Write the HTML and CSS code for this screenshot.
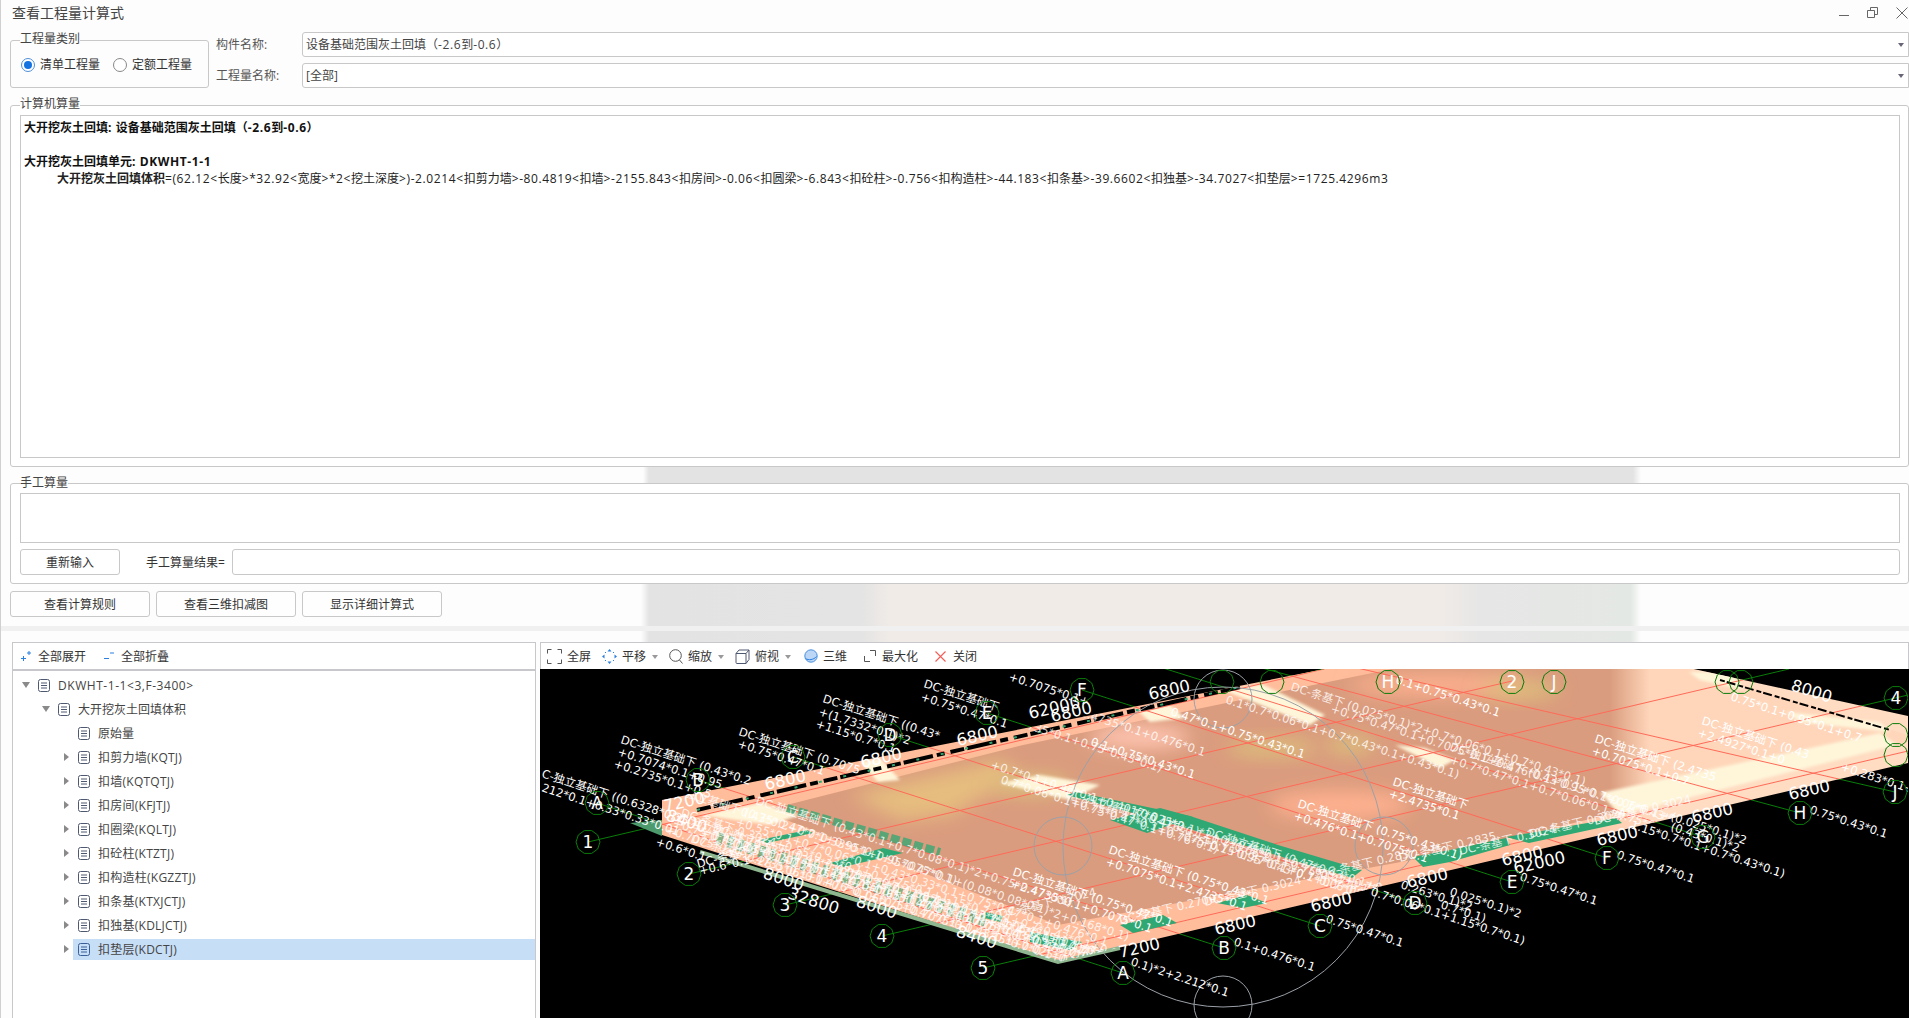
FILE: index.html
```html
<!DOCTYPE html>
<html lang="zh">
<head>
<meta charset="utf-8">
<title>查看工程量计算式</title>
<link rel="stylesheet" href="styles.css">
</head>
<body>
<div class="window">
  <header class="titlebar">
    <span class="title">查看工程量计算式</span>
    <div class="winbtns">
      <svg width="10" height="20" viewBox="0 0 10 20"><path d="M0 15.500h10" class="ln"/></svg>
      <svg width="11" height="20" viewBox="0 0 11 20"><path d="M.5 10.500h7v7h-7zM3.500 10V7.500h7v7H8" class="ln"/></svg>
      <svg width="12" height="20" viewBox="0 0 12 20"><path d="M.5 7.500l11 11M11.500 7.500l-11 11" class="ln"/></svg>
    </div>
  </header>

  <section class="top">
    <fieldset class="group kind">
      <legend class="legend">工程量类别</legend>
      <div class="radios">
        <label class="radio"><span class="dot on"></span>清单工程量</label>
        <label class="radio"><span class="dot"></span>定额工程量</label>
      </div>
    </fieldset>
    <div class="form">
      <span class="flabel">构件名称:</span>
      <div class="combo"><span>设备基础范围灰土回填（<span class="n">-2.6</span>到<span class="n">-0.6</span>）</span><i class="caret"></i></div>
      <span class="flabel">工程量名称:</span>
      <div class="combo"><span>[全部]</span><i class="caret"></i></div>
    </div>
  </section>

  <fieldset class="group computer">
    <legend class="legend">计算机算量</legend>
    <div class="formula">
      <p class="b">大开挖灰土回填<span class="n">: </span>设备基础范围灰土回填（<span class="n">-2.6</span>到<span class="n">-0.6</span>）</p>
      <p>&nbsp;</p>
      <p class="b">大开挖灰土回填单元<span class="n">: DKWHT-1-1</span></p>
      <p class="fline"><b>大开挖灰土回填体积</b><span class="n">=(62.12&lt;</span>长度<span class="n">&gt;*32.92&lt;</span>宽度<span class="n">&gt;*2&lt;</span>挖土深度<span class="n">&gt;)-2.0214&lt;</span>扣剪力墙<span class="n">&gt;-80.4819&lt;</span>扣墙<span class="n">&gt;-2155.843&lt;</span>扣房间<span class="n">&gt;-0.06&lt;</span>扣圆梁<span class="n">&gt;-6.843&lt;</span>扣砼柱<span class="n">&gt;-0.756&lt;</span>扣构造柱<span class="n">&gt;-44.183&lt;</span>扣条基<span class="n">&gt;-39.6602&lt;</span>扣独基<span class="n">&gt;-34.7027&lt;</span>扣垫层<span class="n">&gt;=1725.4296m3</span></p>
    </div>
  </fieldset>

  <div class="manual-wrap">
    <fieldset class="group manual">
      <legend class="legend low">手工算量</legend>
      <div class="mbox"></div>
      <div class="mrow">
        <button class="btn redo">重新输入</button>
        <span class="mlabel">手工算量结果=</span>
        <div class="minput"></div>
      </div>
    </fieldset>
  </div>

  <div class="actions">
    <button class="btn act">查看计算规则</button>
    <button class="btn act">查看三维扣减图</button>
    <button class="btn act">显示详细计算式</button>
  </div>
  <div class="band"></div>

  <div class="split">
    <aside class="treepanel">
      <div class="ttool">
        <span class="titem">
          <svg width="10" height="12" viewBox="0 0 10 12"><path d="M0 8.500h5M2.500 6v5M6 3h4M8 1v4" class="blue"/></svg>全部展开</span>
        <span class="titem">
          <svg width="10" height="12" viewBox="0 0 10 12"><path d="M0 8.500h5M6 3h4" class="blue"/></svg>全部折叠</span>
      </div>
      <div class="tree">
        <div class="row l1"><svg class="arr" width="10" height="8" viewBox="0 0 10 8"><path d="M1 1h8L5 7z"/></svg><span class="node"><svg class="doc" width="12" height="13" viewBox="0 0 12 13"><rect x=".5" y=".5" width="11" height="12" rx="2"/><path d="M3 4h6M3 6.500h6M3 9h6"/></svg><span class="n">DKWHT-1-1&lt;3,F-3400&gt;</span></span></div>
        <div class="row l2"><svg class="arr" width="10" height="8" viewBox="0 0 10 8"><path d="M1 1h8L5 7z"/></svg><span class="node"><svg class="doc" width="12" height="13" viewBox="0 0 12 13"><rect x=".5" y=".5" width="11" height="12" rx="2"/><path d="M3 4h6M3 6.500h6M3 9h6"/></svg>大开挖灰土回填体积</span></div>
        <div class="row l3"><span class="arr"></span><span class="node"><svg class="doc" width="12" height="13" viewBox="0 0 12 13"><rect x=".5" y=".5" width="11" height="12" rx="2"/><path d="M3 4h6M3 6.500h6M3 9h6"/></svg>原始量</span></div>
        <div class="row l3"><svg class="arr" width="10" height="10" viewBox="0 0 10 10"><path d="M3 1l5 4-5 4z"/></svg><span class="node"><svg class="doc" width="12" height="13" viewBox="0 0 12 13"><rect x=".5" y=".5" width="11" height="12" rx="2"/><path d="M3 4h6M3 6.500h6M3 9h6"/></svg><span>扣剪力墙(KQTJ)</span></span></div>
        <div class="row l3"><svg class="arr" width="10" height="10" viewBox="0 0 10 10"><path d="M3 1l5 4-5 4z"/></svg><span class="node"><svg class="doc" width="12" height="13" viewBox="0 0 12 13"><rect x=".5" y=".5" width="11" height="12" rx="2"/><path d="M3 4h6M3 6.500h6M3 9h6"/></svg><span>扣墙(KQTQTJ)</span></span></div>
        <div class="row l3"><svg class="arr" width="10" height="10" viewBox="0 0 10 10"><path d="M3 1l5 4-5 4z"/></svg><span class="node"><svg class="doc" width="12" height="13" viewBox="0 0 12 13"><rect x=".5" y=".5" width="11" height="12" rx="2"/><path d="M3 4h6M3 6.500h6M3 9h6"/></svg><span>扣房间(KFJTJ)</span></span></div>
        <div class="row l3"><svg class="arr" width="10" height="10" viewBox="0 0 10 10"><path d="M3 1l5 4-5 4z"/></svg><span class="node"><svg class="doc" width="12" height="13" viewBox="0 0 12 13"><rect x=".5" y=".5" width="11" height="12" rx="2"/><path d="M3 4h6M3 6.500h6M3 9h6"/></svg><span>扣圈梁(KQLTJ)</span></span></div>
        <div class="row l3"><svg class="arr" width="10" height="10" viewBox="0 0 10 10"><path d="M3 1l5 4-5 4z"/></svg><span class="node"><svg class="doc" width="12" height="13" viewBox="0 0 12 13"><rect x=".5" y=".5" width="11" height="12" rx="2"/><path d="M3 4h6M3 6.500h6M3 9h6"/></svg><span>扣砼柱(KTZTJ)</span></span></div>
        <div class="row l3"><svg class="arr" width="10" height="10" viewBox="0 0 10 10"><path d="M3 1l5 4-5 4z"/></svg><span class="node"><svg class="doc" width="12" height="13" viewBox="0 0 12 13"><rect x=".5" y=".5" width="11" height="12" rx="2"/><path d="M3 4h6M3 6.500h6M3 9h6"/></svg><span>扣构造柱(KGZZTJ)</span></span></div>
        <div class="row l3"><svg class="arr" width="10" height="10" viewBox="0 0 10 10"><path d="M3 1l5 4-5 4z"/></svg><span class="node"><svg class="doc" width="12" height="13" viewBox="0 0 12 13"><rect x=".5" y=".5" width="11" height="12" rx="2"/><path d="M3 4h6M3 6.500h6M3 9h6"/></svg><span>扣条基(KTXJCTJ)</span></span></div>
        <div class="row l3"><svg class="arr" width="10" height="10" viewBox="0 0 10 10"><path d="M3 1l5 4-5 4z"/></svg><span class="node"><svg class="doc" width="12" height="13" viewBox="0 0 12 13"><rect x=".5" y=".5" width="11" height="12" rx="2"/><path d="M3 4h6M3 6.500h6M3 9h6"/></svg><span>扣独基(KDLJCTJ)</span></span></div>
        <div class="row l3"><svg class="arr" width="10" height="10" viewBox="0 0 10 10"><path d="M3 1l5 4-5 4z"/></svg><span class="node sel"><svg class="doc" width="12" height="13" viewBox="0 0 12 13"><rect x=".5" y=".5" width="11" height="12" rx="2"/><path d="M3 4h6M3 6.500h6M3 9h6"/></svg><span>扣垫层(KDCTJ)</span></span></div>
      </div>
    </aside>

    <main class="viewer">
      <div class="vtool">
        <span class="vitem"><svg width="15" height="15" viewBox="0 0 15 15"><path d="M4.500.5H.5v4M10.500.5h4v4M14.500 10.500v4h-4M4.500 14.500h-4v-4" class="dk"/></svg>全屏</span>
        <span class="vitem"><svg width="15" height="15" viewBox="0 0 15 15"><path d="M7.500 0l2 2.500h-4zM7.500 15l2-2.500h-4zM0 7.500l2.500-2v4zM15 7.500l-2.500-2v4z" class="fb"/><path d="M3 3l1 1M12 3l-1 1M3 12l1-1M12 12l-1-1" class="blue"/></svg>平移<i class="vcaret"></i></span>
        <span class="vitem"><svg width="14" height="15" viewBox="0 0 14 15"><circle cx="6.500" cy="6.500" r="5.800" class="dk"/><path d="M10.500 11l3 3.500" class="dk"/></svg>缩放<i class="vcaret"></i></span>
        <span class="vitem"><svg width="15" height="15" viewBox="0 0 15 15"><path d="M1 4.500h10v10H2a1 1 0 0 1-1-1zM1 4.500L4 1h10v9.500l-3 4M11 4.500L14 1" class="dk2"/></svg>俯视<i class="vcaret"></i></span>
        <span class="vitem w3d"><svg width="14" height="14" viewBox="0 0 14 14"><circle cx="7" cy="7" r="6.200" class="ball"/><path d="M1.500 9.500c3 2 8 1.500 11-2" class="blue"/></svg>三维</span>
        <span class="vitem wide g6"><svg width="12" height="12" viewBox="0 0 12 12"><path d="M.5 6v5.500H6M6 .5h5.500V6" class="dk"/></svg>最大化</span>
        <span class="vitem wide g7"><svg width="11" height="11" viewBox="0 0 11 11"><path d="M.5.500l10 10M10.500.500l-10 10" class="red"/></svg>关闭</span>
      </div>
      <svg class="canvas" width="1368" height="349" viewBox="540 669 1368 349">
        <defs>
          <clipPath id="slab"><polygon points="662,800 1340,666 1680,666 1908,716 1908,763 1058,962 662,835"/></clipPath>
          <filter id="bl" x="-30%" y="-80%" width="160%" height="260%"><feGaussianBlur stdDeviation="9"/></filter>
          <filter id="bs" x="-10%" y="-30%" width="120%" height="160%"><feGaussianBlur stdDeviation="1.500"/></filter>
          <linearGradient id="surf" gradientUnits="userSpaceOnUse" x1="1610" y1="0" x2="1650" y2="0">
            <stop offset="0" stop-color="#da9c7e"/><stop offset="1" stop-color="#ffd6ba"/>
          </linearGradient>
          <linearGradient id="edge" gradientUnits="userSpaceOnUse" x1="1550" y1="0" x2="1660" y2="0">
            <stop offset="0" stop-color="#ffbd9c"/><stop offset="1" stop-color="#ffdcc2"/>
          </linearGradient>
          <polygon id="h" points="12,0 9.700,7 3.700,11.400 -3.700,11.400 -9.700,7 -12,0 -9.700,-7 -3.700,-11.400 3.700,-11.400 9.700,-7" class="hex"/>
        </defs>
        <rect x="540" y="669" width="1368" height="349" class="bg"/>

        <g class="axis">
          <path d="M588 842L1324 669M689 874L1512 681M785 905L1789 669M882 936L1908 695M983 968L1908 751"/>
          <path d="M597 803L1123 973M698 780L1224 948M793 757L1320 926M890 735L1415 903M987 713L1512 882M1082 690L1607 858M1150 664L1703 837M1247 664L1800 813M1340 664L1895 792"/>
        </g>

        <polygon points="630,823 662,820 662,836" class="gr2"/>
        <polygon points="662,800 1340,666 1680,666 1908,716 1908,763 1058,962 662,835" fill="url(#edge)"/>
        <path d="M700 852L1058 962L1120 948" class="fade"/>
        <polygon points="763,811 1023,745 1323,683 1392,669 1690,669 1908,735 1908,742 1450,853 1058,925" fill="url(#surf)"/>

        <g clip-path="url(#slab)">
          <polygon points="850,795 1000,760 1020,775 950,815 900,820" class="tan" filter="url(#bl)"/>
          <ellipse cx="1140" cy="737" rx="50" ry="12" class="pink" filter="url(#bl)"/>
          <ellipse cx="1272" cy="748" rx="45" ry="8" class="yel" filter="url(#bl)"/>
          <ellipse cx="1350" cy="745" rx="25" ry="8" class="yel" filter="url(#bl)"/>
          <ellipse cx="1340" cy="805" rx="70" ry="14" class="sal" filter="url(#bl)"/>
          <ellipse cx="1440" cy="685" rx="90" ry="10" class="sal" filter="url(#bl)"/>
          <ellipse cx="1520" cy="690" rx="40" ry="8" class="yel" filter="url(#bl)"/>
          <ellipse cx="1030" cy="785" rx="40" ry="10" class="yel" filter="url(#bl)"/>

          <g class="cream" filter="url(#bs)">
            <polygon points="1600,793 1880,733 1897,745 1620,815"/>
            <polygon points="1000,783 1040,775 1100,785 1070,800"/>
            <polygon points="860,762 880,758 900,780 878,782"/>
            <polygon points="1137,710 1170,705 1185,718 1150,722"/>
            <polygon points="1223,690 1262,684 1325,715 1310,725"/>
            <polygon points="1395,745 1425,748 1455,760 1440,768"/>
            <polygon points="1689,672 1730,672 1745,690 1700,680"/>
            <polygon points="1786,712 1880,722 1890,732 1800,722"/>
            <polygon points="700,815 760,803 800,815 770,825"/>
          </g>

          <g class="redg">
            <path d="M588 842L1324 669M689 874L1512 681M785 905L1789 669M882 936L1908 695M983 968L1908 751"/>
            <path d="M597 803L1123 973M698 780L1224 948M793 757L1320 926M890 735L1415 903M987 713L1512 882M1082 690L1607 858M1150 664L1703 837M1247 664L1800 813M1340 664L1895 792"/>
          </g>

          <g class="gs">
            <polygon points="1067,795 1076,792 1190,816 1278,845 1362,870 1352,878 1180,826"/>
            <polygon points="1110,820 1160,808 1193,817 1147,833"/>
            <polygon points="760,840 807,830 813,833 767,843"/>
            <polygon points="843,867 903,853 883,848 830,863"/>
            <polygon points="1120,925 1163,915 1177,923 1133,933"/>
            <polygon points="1217,903 1247,895 1267,903 1243,908"/>
            <polygon points="1413,857 1450,850 1450,862 1423,867"/>
            <polygon points="1450,850 1506,838 1510,845 1450,862"/>
            <polygon points="1506,837 1616,818 1622,823 1529,843"/>
            <polygon points="985,912 1003,916 1000,922 985,918"/>
            <polygon points="1030,932 1082,942 1070,950 1030,942"/>
          </g>
          <path d="M787 808L940 852" class="gband"/>
          <path d="M717 838L990 922" class="gband2"/>
          <path d="M697 810L990 743L1240 687" class="bk"/>
          <path d="M1720 680L1890 730" class="bk thin"/>
          <path d="M697 810L990 743L1240 687" class="bkg"/>
        </g>

        <g class="gc">
          <circle cx="1223" cy="847" r="160"/><circle cx="1223" cy="699" r="29"/><circle cx="1223" cy="1005" r="29"/><circle cx="1063" cy="846" r="29"/><circle cx="1384" cy="846" r="29"/>
        </g>

        <g class="t dense" clip-path="url(#slab)">
          <text x="665" y="790" transform="rotate(18 665 790)">DC-独立基础下 (0.75*0.47*0.1+0.95*0.1+0.7075*0.1)</text>
          <text x="670" y="820" transform="rotate(18 670 820)">DC-独立基础下 (0.53*0.43*0.1+0.7*0.33*0.1+0.75*0.47*0.1+0.476*0.1+0.7075*0.1)</text>
          <text x="672" y="826" transform="rotate(18 672 826)">+0.75*0.47*0.1+0.7075*0.1+2.4735*0.1+0.476*0.1+0.75*0.43*0.1+0.7*0.06*0.1</text>
          <text x="680" y="816" transform="rotate(18 680 816)">DC-条基下 0.3024+0.55*0.33*0.1+0.7075*0.1+1.15*0.7*0.1+0.7*0.43*0.1+0.95</text>
          <text x="665" y="833" transform="rotate(18 665 833)">+0.7075*0.1+2.4735*0.1+0.476*0.1+0.75*0.47*0.1+0.43*0.1+0.025*0.1+0.47*0.42</text>
          <text x="690" y="842" transform="rotate(18 690 842)">DC-条基下 0.28 0.06*0.1+0.7*0.06*0.1+0.7075*0.1+1.15*0.7*0.1+0.65*0.47*0.1</text>
          <text x="700" y="836" transform="rotate(18 700 836)">+0.7*0.06*0.1+0.75*0.43*0.1+0.95*0.47*0.1+0.7075*0.1+0.476*0.1+0.33*0.33*0.1</text>
          <text x="712" y="831" transform="rotate(18 712 831)">DC-独立基础下 (0.47*0.42*0.1+0.7*0.08*0.1+0.43*0.1+2.4735*0.1+0.168*0.1)</text>
          <text x="725" y="845" transform="rotate(18 725 845)">+0.95*0.1+0.7075*0.1+0.476*0.1+0.75*0.47*0.1+0.7*0.43*0.1+0.283*0.1</text>
          <text x="740" y="815" transform="rotate(18 740 815)">0.43*0.2+0.7*0.33*0.1+0.95*0.47*0.1+(0.08*0.08*0.1)*2+0.168*0.1)</text>
          <text x="735" y="825" transform="rotate(18 735 825)">+0.55*0.1+0.7*0.06*0.1+0.43*0.33*0.1+0.75*0.47*0.1+0.476*0.1</text>
          <text x="755" y="804" transform="rotate(18 755 804)">DC-独立基础下 (0.43*0.1+0.7*0.08*0.1)*2+0.75*0.47*0.1)</text>
          <text x="835" y="872" transform="rotate(18 835 872)">0.03*0.1+0.47*0.42*0.1+0.7*0.06*0.1+0.7075*0.1+0.43*0.33*0.1)</text>
          <text x="1000" y="720" transform="rotate(18 1000 720)">+0.2735*0.1+0.75*0.43*0.1)</text>
          <text x="990" y="768" transform="rotate(18 990 768)">+0.7*0.1+0.47*0.1+0.4017*0.1)*2</text>
          <text x="1000" y="783" transform="rotate(18 1000 783)">0.7*0.06*0.1+0.75*0.47*0.1+0.76*0.1)</text>
          <text x="1065" y="795" transform="rotate(18 1065 795)">DC-独立基础下 (0.476*0.1+0.7*0.06*0.1+0.75*0.47*0.1+0.025*0.1)*2</text>
          <text x="1070" y="803" transform="rotate(18 1070 803)">+0.75*0.47*0.1+0.7075*0.1+0.95*0.43*0.1+0.7*0.06*0.1+0.7*0.43*0.1</text>
          <text x="1135" y="815" transform="rotate(18 1135 815)">(0.025*0.1)*2+0.7075*0.1+0.476*0.1+0.75*0.43*0.1+0.283</text>
          <text x="1200" y="845" transform="rotate(18 1200 845)">+0.75*0.47*0.1+0.7*0.06*0.1+0.43*0.47*0.1</text>
          <text x="1205" y="835" transform="rotate(18 1205 835)">DC-独立基础下 (0.47*0.43*0.1+0.025*0.1)</text>
          <text x="1290" y="690" transform="rotate(18 1290 690)">DC-条基下 (0.025*0.1)*2+0.7*0.06*0.1+0.7*0.43*0.1)</text>
          <text x="1330" y="712" transform="rotate(18 1330 712)">+0.75*0.47*0.1+0.7075*0.1+0.476*0.1+0.95*0.1+0.7*0.43*0.1</text>
          <text x="1225" y="703" transform="rotate(18 1225 703)">0.1*0.7*0.06*0.1+0.7*0.43*0.1+0.43*0.1)</text>
          <text x="1449" y="750" transform="rotate(18 1449 750)">DC-独立基础下 (0.43*0.1+0.7*0.06*0.1+0.75*0.47*0.1)</text>
          <text x="1449" y="763" transform="rotate(18 1449 763)">+0.7*0.47*0.1+0.7*0.06*0.1+0.75*0.43*0.1+0.7*0.08*0.1</text>
          <text x="1000" y="690" transform="rotate(18 1000 690)">+0.7075*0.1+2.4735*0.1+0.476*0.1</text>
        </g>
        <g class="t dense">
          <text x="1000" y="918" transform="rotate(-13 1000 918)">DC-条基下 0.2024</text>
          <text x="1120" y="924" transform="rotate(-13 1120 924)">DC-条基下 0.2700</text>
          <text x="1205" y="906" transform="rotate(-13 1205 906)">DC-条基下 0.3024</text>
          <text x="1320" y="878" transform="rotate(-13 1320 878)">DC-条基下 0.283</text>
          <text x="1400" y="862" transform="rotate(-13 1400 862)">DC-条基下 0.2835</text>
          <text x="1460" y="855" transform="rotate(-13 1460 855)">DC-条基下 0.3024</text>
          <text x="1530" y="838" transform="rotate(-13 1530 838)">DC-条基下 0.3024</text>
          <text x="1595" y="825" transform="rotate(-13 1595 825)">DC-条基下 0.3024</text>
        </g>

        <g class="t">
          <text x="541" y="777" transform="rotate(18 541 777)">C-独立基础下 ((0.6328*0.33</text>
          <text x="541" y="791" transform="rotate(18 541 791)">212*0.1+0.33*0.33*0.01</text>
          <text x="620" y="743" transform="rotate(18 620 743)">DC-独立基础下 (0.43*0.2</text>
          <text x="617" y="755" transform="rotate(18 617 755)">+0.7074*0.1+0.95</text>
          <text x="613" y="767" transform="rotate(18 613 767)">+0.2735*0.1+0.5</text>
          <text x="738" y="735" transform="rotate(18 738 735)">DC-独立基础下 (0.7075</text>
          <text x="737" y="747" transform="rotate(18 737 747)">+0.75*0.47*0.1</text>
          <text x="822" y="702" transform="rotate(18 822 702)">DC-独立基础下 ((0.43*</text>
          <text x="818" y="715" transform="rotate(18 818 715)">+(1.7332*0.1)*2</text>
          <text x="815" y="727" transform="rotate(18 815 727)">+1.15*0.7*0.1</text>
          <text x="923" y="687" transform="rotate(18 923 687)">DC-独立基础下</text>
          <text x="920" y="700" transform="rotate(18 920 700)">+0.75*0.47*0.1</text>
          <text x="655" y="845" transform="rotate(18 655 845)">+0.6*0.1</text>
          <text x="700" y="875" transform="rotate(-13 700 875)">+0.6*0.1</text>
          <text x="698" y="868" transform="rotate(-15 698 868)">DC-条基下</text>
          <text x="1008" y="680" transform="rotate(18 1008 680)">+0.7075*0.1+</text>
          <text x="1108" y="853" transform="rotate(18 1108 853)">DC-独立基础下 (0.75*0.43*0.1</text>
          <text x="1105" y="865" transform="rotate(18 1105 865)">+0.7075*0.1+2.4735*0.1</text>
          <text x="1012" y="875" transform="rotate(18 1012 875)">DC-独立基础下 (0.75*0.47*0.1</text>
          <text x="1010" y="887" transform="rotate(18 1010 887)">+2.4735*0.1+0.7075*0.1</text>
          <text x="1297" y="807" transform="rotate(18 1297 807)">DC-独立基础下 (0.75*0.43*0.1)</text>
          <text x="1293" y="819" transform="rotate(18 1293 819)">+0.476*0.1+0.7075*0.1</text>
          <text x="1392" y="785" transform="rotate(18 1392 785)">DC-独立基础下</text>
          <text x="1388" y="797" transform="rotate(18 1388 797)">+2.4735*0.1</text>
          <text x="1090" y="745" transform="rotate(18 1090 745)">0.1+0.75*0.43*0.1</text>
          <text x="1170" y="715" transform="rotate(18 1170 715)">0.47*0.1+0.75*0.43*0.1</text>
          <text x="1130" y="965" transform="rotate(18 1130 965)">0.1)*2+2.212*0.1</text>
          <text x="1233" y="945" transform="rotate(18 1233 945)">0.1+0.476*0.1</text>
          <text x="1325" y="922" transform="rotate(18 1325 922)">0.75*0.47*0.1</text>
          <text x="1370" y="895" transform="rotate(18 1370 895)">0.7*0.06*0.1+1.15*0.7*0.1)</text>
          <text x="1400" y="888" transform="rotate(18 1400 888)">0.263*0.1)*2</text>
          <text x="1519" y="880" transform="rotate(18 1519 880)">0.75*0.47*0.1</text>
          <text x="1616" y="858" transform="rotate(18 1616 858)">0.75*0.47*0.1</text>
          <text x="1809" y="813" transform="rotate(18 1809 813)">0.75*0.43*0.1</text>
          <text x="1630" y="828" transform="rotate(18 1630 828)">1.15*0.7*0.1+0.7*0.43*0.1)</text>
          <text x="1670" y="820" transform="rotate(18 1670 820)">(0.025*0.1)*2</text>
          <text x="1670" y="830" transform="rotate(18 1670 830)">(0.43*0.1)*2</text>
          <text x="1594" y="742" transform="rotate(18 1594 742)">DC-独立基础下 (2.4735</text>
          <text x="1591" y="754" transform="rotate(18 1591 754)">+0.7075*0.1+0.7</text>
          <text x="1701" y="724" transform="rotate(18 1701 724)">DC-独立基础下 (0.43</text>
          <text x="1697" y="736" transform="rotate(18 1697 736)">+2.4927*0.1+0</text>
          <text x="1840" y="770" transform="rotate(18 1840 770)">+0.283*0.1+0.7</text>
          <text x="1395" y="683" transform="rotate(18 1395 683)">0.1+0.75*0.43*0.1</text>
          <text x="1730" y="700" transform="rotate(18 1730 700)">0.75*0.1+0.95*0.1+0.7</text>
          <text x="1449" y="895" transform="rotate(18 1449 895)">0.025*0.1)*2</text>
          <text x="1440" y="908" transform="rotate(18 1440 908)">0.7*0.1)</text>
        </g>

        <g class="dim">
          <text x="762" y="878" transform="rotate(18 762 878)">8000</text>
          <text x="787" y="898" transform="rotate(18 787 898)">32800</text>
          <text x="855" y="906" transform="rotate(18 855 906)">8000</text>
          <text x="955" y="936" transform="rotate(18 955 936)">8400</text>
          <text x="665" y="820" transform="rotate(18 665 820)">8400</text>
          <text x="1120" y="958" transform="rotate(-13 1120 958)">7200</text>
          <text x="1216" y="935" transform="rotate(-13 1216 935)">6800</text>
          <text x="1312" y="912" transform="rotate(-13 1312 912)">6800</text>
          <text x="1408" y="888" transform="rotate(-13 1408 888)">6800</text>
          <text x="1503" y="866" transform="rotate(-13 1503 866)">6800</text>
          <text x="1515" y="874" transform="rotate(-13 1515 874)">62000</text>
          <text x="1598" y="846" transform="rotate(-13 1598 846)">6800</text>
          <text x="1693" y="823" transform="rotate(-13 1693 823)">6800</text>
          <text x="1790" y="800" transform="rotate(-13 1790 800)">6800</text>
          <text x="665" y="812" transform="rotate(-13 665 812)">7200</text>
          <text x="766" y="790" transform="rotate(-13 766 790)">6800</text>
          <text x="862" y="768" transform="rotate(-13 862 768)">6800</text>
          <text x="958" y="746" transform="rotate(-13 958 746)">6800</text>
          <text x="1030" y="719" transform="rotate(-13 1030 719)">62000</text>
          <text x="1052" y="722" transform="rotate(-13 1052 722)">6800</text>
          <text x="1150" y="700" transform="rotate(-13 1150 700)">6800</text>
          <text x="1790" y="690" transform="rotate(18 1790 690)">8000</text>
        </g>

        <g>
          <use href="#h" x="588" y="842"/><use href="#h" x="689" y="874"/><use href="#h" x="785" y="905"/><use href="#h" x="882" y="936"/><use href="#h" x="983" y="968"/>
          <use href="#h" x="597" y="803"/><use href="#h" x="698" y="780"/><use href="#h" x="793" y="757"/><use href="#h" x="890" y="735"/><use href="#h" x="987" y="713"/><use href="#h" x="1082" y="690"/>
          <use href="#h" x="1123" y="973"/><use href="#h" x="1224" y="948"/><use href="#h" x="1320" y="926"/><use href="#h" x="1415" y="903"/><use href="#h" x="1512" y="882"/><use href="#h" x="1607" y="858"/><use href="#h" x="1703" y="837"/><use href="#h" x="1800" y="813"/><use href="#h" x="1895" y="792"/>
          <use href="#h" x="1222" y="682"/><use href="#h" x="1272" y="682"/><use href="#h" x="1388" y="682"/><use href="#h" x="1512" y="682"/><use href="#h" x="1554" y="682"/>
          <use href="#h" x="1727" y="682"/><use href="#h" x="1741" y="682"/><use href="#h" x="1896" y="698"/><use href="#h" x="1896" y="735"/><use href="#h" x="1896" y="755"/>
        </g>
        <g class="lbl">
          <text x="588" y="848">1</text><text x="689" y="880">2</text><text x="785" y="911">3</text><text x="882" y="942">4</text><text x="983" y="974">5</text>
          <text x="597" y="809">A</text><text x="698" y="786">B</text><text x="793" y="763">C</text><text x="890" y="741">D</text><text x="987" y="719">E</text><text x="1082" y="696">F</text>
          <text x="1123" y="979">A</text><text x="1224" y="954">B</text><text x="1320" y="932">C</text><text x="1415" y="909">D</text><text x="1512" y="888">E</text><text x="1607" y="864">F</text><text x="1703" y="843">G</text><text x="1800" y="819">H</text><text x="1895" y="798">J</text>
          <text x="1388" y="688">H</text><text x="1512" y="688">2</text><text x="1554" y="688">J</text><text x="1896" y="704">4</text>
        </g>
      </svg>
    </main>
  </div>
</div>
</body>
</html>
```
FILE: styles.css
```css
* { box-sizing: border-box; }
html, body { margin: 0; padding: 0; }
body {
  width: 1909px; height: 1018px; overflow: hidden;
  background: #fdfdfd; color: #333;
  font: 12px/17px "Open Sans", "Noto Sans CJK SC", sans-serif;
  text-spacing-trim: space-all;
}
.n { letter-spacing: .6px; }
.window { width: 1909px; height: 1018px; border-left: 1px solid #d0d0d0; display: flex; flex-direction: column; }

.titlebar { height: 32px; flex: none; display: flex; justify-content: space-between; padding: 0 1px 0 11px; }
.title { font-size: 14px; line-height: 26px; color: #444; }
.winbtns { display: flex; gap: 18px; align-items: flex-start; }
.winbtns svg { display: block; }
.ln { fill: none; stroke: #666; stroke-width: 1; }

.group { margin: 0; padding: 0; border: 1px solid #c8c8c8; border-radius: 3px; background: #fff; min-width: 0; }
.legend { margin-left: 9px; padding: 0 0 3px; font-size: 12px; line-height: 13px; color: #444; height: 16px; }
.legend.low { padding: 0; line-height: 14px; height: 14px; }
.computer .legend, .manual .legend { margin-left: 0; }

.top { height: 65px; flex: none; display: flex; padding-left: 9px; }
.kind { width: 199px; height: 56px; background: transparent; }
.radios { display: flex; padding: 8px 0 0 10px; gap: 13px; }
.radio { display: flex; align-items: center; gap: 5px; line-height: 18px; color: #333; }
.dot { width: 14px; height: 14px; border-radius: 50%; border: 1px solid #888; background: #fff; display: inline-flex; align-items: center; justify-content: center; }
.dot.on { border-color: #4f8fd8; }
.dot.on::after { content: ""; width: 8px; height: 8px; border-radius: 50%; background: #1473e0; }

.form { flex: 1; margin-left: 7px; display: grid; grid-template-columns: 86px 1fr; grid-auto-rows: 25px; row-gap: 6px; align-items: center; }
.flabel { color: #555; }
.combo { height: 25px; border: 1px solid #c8c8c8; border-radius: 3px 0 0 3px; padding: 0 3px; display: flex; align-items: center; justify-content: space-between; background: #fff; color: #444; }
.caret { width: 0; height: 0; border: 3px solid transparent; border-top: 4px solid #667; border-bottom: 0; margin-right: 1px; }

.computer { height: 370px; flex: none; margin-left: 9px; padding: 2px 8px 8px 9px; width: 1899px; }
.formula { height: 343px; border: 1px solid #c8c8c8; background: #fff; padding: 3px 3px; color: #111; }
.formula p { margin: 0; line-height: 17px; white-space: nowrap; }
.formula .b, .formula b { font-weight: 700; }
.fline { padding-left: 33px; color: #222; }

.manual-wrap { height: 117px; flex: none; padding: 9px 0 0 9px; background: linear-gradient(90deg, transparent 642px, #e3e3e3 648px, #e3e3e3 1632px, transparent 1640px) 0 0 / 100% 16px no-repeat; }
.manual { height: 108px; width: 1899px; padding: 3px 8px 0 9px; }
.mbox { height: 50px; border: 1px solid #c8c8c8; background: #fff; }
.mrow { display: flex; align-items: center; margin-top: 6px; }
.btn { font: inherit; color: #333; height: 26px; background: #fff; border: 1px solid #c8c8c8; border-radius: 3px; padding: 0; }
.redo { width: 100px; flex: none; }
.mlabel { margin-left: 26px; width: 86px; flex: none; }
.minput { flex: 1; height: 26px; border: 1px solid #c8c8c8; border-radius: 3px; background: #fff; }

.actions { height: 42px; flex: none; padding: 7px 0 0 9px; display: flex; gap: 6px; align-items: flex-start; background: linear-gradient(90deg, transparent 640px, #e3e3e3 648px, #e4e4e4 860px, #f0ebe7 890px, #f0ebe7 1440px, #e6e6e6 1480px, #e4e8e4 1630px, transparent 1640px); }
.act { width: 140px; background: #fefefe; }
.band { height: 5px; flex: none; background: #f0f0f0; }

.split { flex: 1; min-height: 0; display: flex; gap: 4px; padding: 11px 0 0 11px; background: linear-gradient(90deg, transparent 640px, #e3e3e3 648px, #e4e4e4 860px, #f0ebe7 890px, #f0ebe7 1440px, #e6e6e6 1480px, #e4e8e4 1630px, transparent 1640px) 0 0 / 100% 11px no-repeat; }
.treepanel { width: 524px; flex: none; background: #fff; border: 1px solid #c8c8cc; border-bottom: 0; display: flex; flex-direction: column; }
.ttool { flex: none; border-bottom: 2px solid #c8c8cc; display: flex; align-items: center; padding-left: 8px; gap: 18px; box-sizing: content-box; height: 26px; }
.titem { display: inline-flex; align-items: center; gap: 7px; color: #333; }
.blue { fill: none; stroke: #2a7fe0; stroke-width: 1; }
.fb { fill: #2a7fe0; }

.tree { flex: 1; padding-top: 2px; }
.row { height: 24px; display: flex; align-items: center; gap: 2px; color: #444; white-space: nowrap; }
.l1 { padding-left: 8px; } .l2 { padding-left: 28px; } .l3 { padding-left: 48px; }
.arr { width: 10px; flex: none; fill: #8a8a8a; display: block; }
.node { flex: 1; height: 21px; display: flex; align-items: center; gap: 8px; padding-left: 5px; }
.node > span { letter-spacing: .25px; }
.node > span.n { letter-spacing: .55px; }
.node.sel { background: #c7def7; }
.doc { flex: none; fill: none; stroke: #4e5870; stroke-width: 1; }
.sel .doc { stroke: #3a5f96; }

.viewer { flex: 1; min-width: 0; display: flex; flex-direction: column; background: #000; }
.vtool { height: 27px; flex: none; background: #fff; border: 1px solid #c8c8cc; border-bottom: 0; display: flex; align-items: center; padding-left: 6px; gap: 11px; }
.vitem { display: inline-flex; align-items: center; gap: 5px; color: #333; white-space: nowrap; }
.w3d { margin-left: 2px; }
.wide { margin-left: 6px; }
.vitem.g6 { gap: 6px; } .vitem.g7 { gap: 7px; }
.vcaret { width: 0; height: 0; border: 3px solid transparent; border-top: 4px solid #999; border-bottom: 0; margin: 2px 0 0 1px; }
.dk { fill: none; stroke: #555; stroke-width: 1; }
.dk2 { fill: none; stroke: #4e5870; stroke-width: 1; }
.ball { fill: #bcd6f5; stroke: #4a90e0; stroke-width: 1; }
.red { fill: none; stroke: #f0605a; stroke-width: 1.200; }

.canvas { display: block; flex: none; }
.bg { fill: #000; }
.axis path { fill: none; stroke: #0a7d0a; stroke-width: 1; }
.redg path { fill: none; stroke: #ff6a58; stroke-width: 1; }
.hex { fill: none; stroke: #0a7d0a; stroke-width: 1; }
.gr2 { fill: #4d9a6d; }
.fade { fill: none; stroke: #8fb78f; stroke-width: 4; }
.tan { fill: #e6bd7f; }
.pink { fill: #ffc4b0; }
.yel { fill: #dcc07a; }
.sal { fill: #ffb18f; }
.cream polygon { fill: #fff6da; }
.gs polygon { fill: #2fa873; }
.gband { fill: none; stroke: #2fa873; stroke-width: 8; stroke-dasharray: 9 3; opacity: .75; }
.gband2 { fill: none; stroke: #2fa873; stroke-width: 12; stroke-dasharray: 6 5; opacity: .6; }
.bk { fill: none; stroke: #000; stroke-width: 4; stroke-dasharray: 14 3 30 4 8 6; }
.bk.thin { stroke-width: 2; stroke-dasharray: 5 2 9 3; }
.bkg { fill: none; stroke: #2fa873; stroke-width: 2; stroke-dasharray: 3 22; }
.gc circle { fill: none; stroke: #9ba1a8; stroke-width: 1; }
.t text { font: 11.500px "DejaVu Sans", "Noto Sans CJK SC", sans-serif; fill: #fff; }
.dense text { fill: #fff; fill-opacity: .82; }
.dim text { font: 16.500px "DejaVu Sans", sans-serif; fill: #fff; }
.lbl text { font: 17px "DejaVu Sans", sans-serif; fill: #fff; text-anchor: middle; }
```
